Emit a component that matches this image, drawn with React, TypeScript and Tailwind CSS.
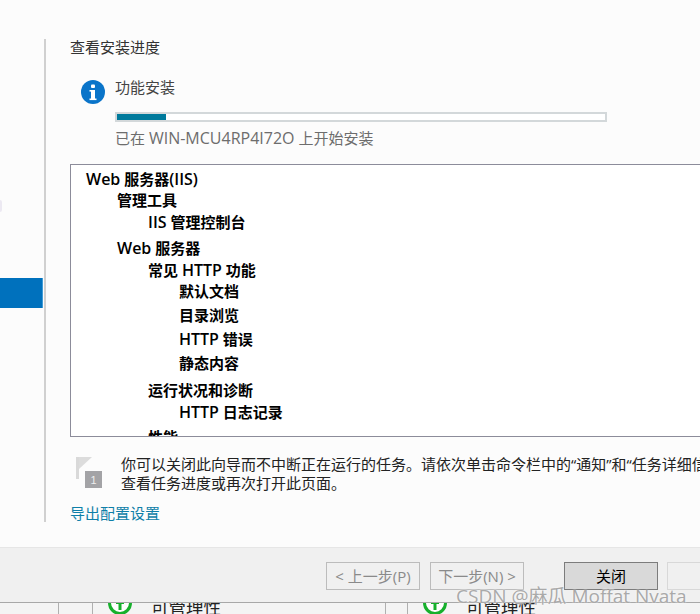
import React from "react";

const FONT = "font-['Open_Sans','Noto_Sans_CJK_SC',sans-serif]";

function En({ children }: { children: React.ReactNode }) {
  return <span className="text-[16px]">{children}</span>;
}

const TREE_ROWS = [
  { id: "iis", label: <><En>Web</En> 服务器<En>(IIS)</En></>, cls: "pl-[15px]" },
  { id: "tools", label: "管理工具", cls: "mt-[1px] pl-[46px]" },
  { id: "console", label: <><En>IIS</En> 管理控制台</>, cls: "mt-[2px] pl-[77px]" },
  { id: "web", label: <><En>Web</En> 服务器</>, cls: "mt-[6px] pl-[46px]" },
  { id: "common", label: <>常见 <En>HTTP</En> 功能</>, cls: "mt-[2px] pl-[77px]" },
  { id: "default", label: "默认文档", cls: "mt-[1px] pl-[108px]" },
  { id: "browse", label: "目录浏览", cls: "mt-[4px] pl-[108px]" },
  { id: "errors", label: <><En>HTTP</En> 错误</>, cls: "mt-[4px] pl-[108px]" },
  { id: "static", label: "静态内容", cls: "mt-[4px] pl-[108px]" },
  { id: "health", label: "运行状况和诊断", cls: "mt-[7px] pl-[77px]" },
  { id: "logging", label: <><En>HTTP</En> 日志记录</>, cls: "mt-[2px] pl-[108px]" },
  { id: "perf", label: "性能", cls: "mt-[5px] pl-[77px]" },
];

function InfoIcon() {
  return (
    <svg width="24" height="24" viewBox="0 0 24 24" className="shrink-0">
      <circle cx="12" cy="12" r="12" fill="#0a74c9" />
      <rect x="10" y="4.5" width="4" height="3.5" rx="1" fill="#fff" />
      <rect x="10" y="10" width="4" height="10" fill="#fff" />
      <rect x="8.5" y="10" width="5" height="1.6" fill="#fff" />
      <rect x="8.5" y="18.5" width="7" height="1.6" fill="#fff" />
    </svg>
  );
}

function FlagIcon() {
  return (
    <svg width="28" height="34" viewBox="0 0 28 34" className="shrink-0">
      <rect x="0" y="0" width="3" height="22" fill="#d9d9d9" />
      <path d="M3 0 H16 L3 12 Z" fill="#dcdcdc" />
      <rect x="9" y="14" width="17" height="17" fill="#a3a3a6" />
      <text x="17.5" y="27" textAnchor="middle" fontSize="11" fill="#eeeeee" fontFamily="Liberation Sans, sans-serif">
        1
      </text>
    </svg>
  );
}

function GreenIcon() {
  return (
    <svg width="24" height="24" viewBox="0 0 24 24" className="shrink-0 -mt-[12px]">
      <circle cx="12" cy="12" r="10.5" fill="#fff" stroke="#16b02c" strokeWidth="3" />
      <rect x="8" y="10" width="8" height="3" fill="#16b02c" />
      <rect x="10.5" y="10" width="3" height="9" fill="#16b02c" />
    </svg>
  );
}

function NavButton({ children, className }: { children?: React.ReactNode; className: string }) {
  return (
    <div className={`h-[28px] shrink-0 flex items-center justify-center border text-[15px] leading-none ${className}`}>
      {children}
    </div>
  );
}

export default function App() {
  return (
    <div className={`relative w-[700px] h-[614px] overflow-hidden flex flex-col bg-[#fcfcfc] text-[15px] ${FONT}`}>
      <div className="h-[548px] shrink-0 flex pt-[39px] pb-[25px] border-b border-[#e6e6e6]">
        {/* sidebar */}
        <div className="relative w-[46px] shrink-0 border-r-2 border-[#d0d0d0] pt-[239px] pr-px">
          <div className="absolute left-0 top-[161px] w-[2px] h-[12px] rounded-r-full bg-[#ece9f2]" />
          <div className="h-[30px] bg-[#0071bd] border-r border-[#3f9bd6]" />
        </div>

        {/* content */}
        <div className="flex-1 min-w-0 pl-[24px] text-[#333]">
          <div className="h-[20px] leading-[17px] text-[#333]">查看安装进度</div>

          <div className="flex gap-[10px] pl-[11px] mt-[20px]">
            <div className="pt-px">
              <InfoIcon />
            </div>
            <div className="w-[492px]">
              <div className="h-[20px] leading-[17px] text-[#444]">功能安装</div>
              <div className="mt-[13px] h-[10px] border-2 border-[#d3d8da] bg-white w-[492px] box-border">
                <div className="h-full w-[49px] bg-[#007a9c]" />
              </div>
              <div className="mt-[6px] h-[20px] leading-[20px] text-[#6d6d6d] whitespace-nowrap">
                已在 <En>WIN-MCU4RP4I72O</En> 上开始安装
              </div>
            </div>
          </div>

          <div className="mt-[16px] w-[700px] h-[273px] border border-[#8c8c9a] bg-white overflow-hidden pt-[4px] text-black font-semibold">
            {TREE_ROWS.map((r) => (
              <div key={r.id} className={`h-[20px] flex items-center whitespace-pre leading-none ${r.cls}`}>
                <span>{r.label}</span>
              </div>
            ))}
          </div>

          <div className="flex gap-[17px] pl-[6px] mt-[20px] text-[#222]">
            <FlagIcon />
            <div className="leading-[19px] whitespace-nowrap -mt-[2px]">
              <div>你可以关闭此向导而不中断正在运行的任务。请依次单击命令栏中的“通知”和“任务详细信息”以</div>
              <div>查看任务进度或再次打开此页面。</div>
            </div>
          </div>

          <div className="mt-[10px] h-[20px] leading-[20px] text-[#0f7fa8]">导出配置设置</div>
        </div>
      </div>

      {/* button bar */}
      <div className="h-[55px] shrink-0 bg-[#f0f0f0] flex items-start pt-[14px] pl-[326px] border-b border-[#a8a8a8] whitespace-nowrap">
        <NavButton className="w-[94px] border-[#bcbcbc] text-[#8a8a8a]">&lt; 上一步(P)</NavButton>
        <NavButton className="w-[94px] ml-[10px] border-[#bcbcbc] text-[#8a8a8a]">下一步(N) &gt;</NavButton>
        <NavButton className="w-[94px] ml-[40px] bg-[#d9d9d9] border-[#7c7c7c] text-black">关闭</NavButton>
        <NavButton className="w-[60px] ml-[9px] border-[#d8d8d8] text-[#8a8a8a]" />
      </div>

      {/* window underneath */}
      <div className="flex-1 flex bg-[#f4f4f4] text-[#222] text-[17.5px] overflow-hidden">
        <div className="w-[59px] shrink-0 border-r border-[#b0b0b0]" />
        <div className="w-[34px] shrink-0 border-r border-[#b0b0b0]" />
        <div className="w-[293px] shrink-0 border-r border-[#b0b0b0] flex gap-[19px] pl-[15px]">
          <GreenIcon />
          <span className="leading-[24px] -mt-[8px]">可管理性</span>
        </div>
        <div className="w-[22px] shrink-0 border-r border-[#b0b0b0]" />
        <div className="flex-1 flex gap-[19px] pl-[15px]">
          <GreenIcon />
          <span className="leading-[24px] -mt-[8px]">可管理性</span>
        </div>
      </div>

      {/* CSDN watermark */}
      <div className="absolute left-[456px] top-[584px] text-[19px] leading-[24px] text-[#a9a9a9] whitespace-nowrap [text-shadow:0_0_2px_#ffffff]">
        CSDN @麻瓜 Moffat Nvata
      </div>
    </div>
  );
}
